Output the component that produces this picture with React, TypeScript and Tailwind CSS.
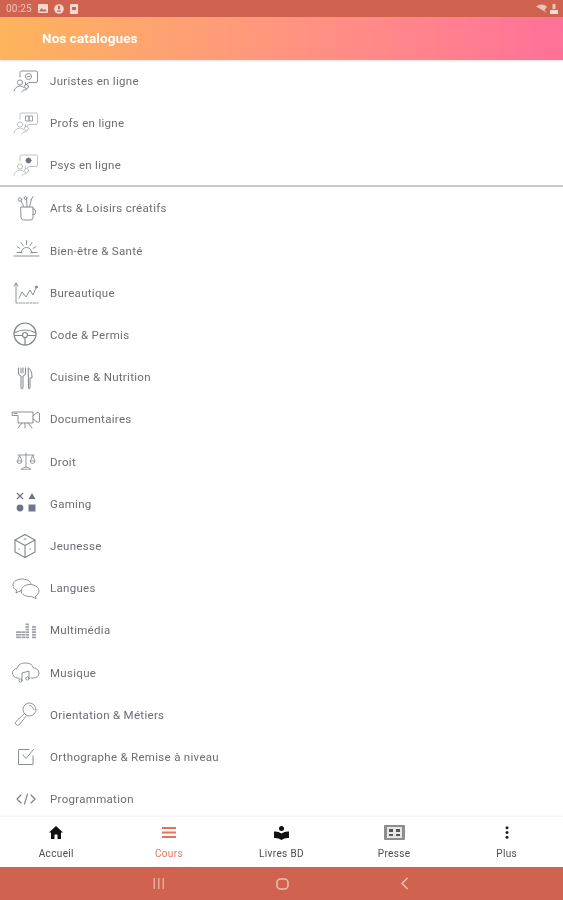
import React from "react";

type IconProps = { children: React.ReactNode; w?: number; h?: number; vb?: string; color?: string; sw?: number };
const Ico = ({ children, w = 28, h = 28, vb = "0 0 28 28", color = "#7f848c", sw = 0.9 }: IconProps) => (
  <svg width={w} height={h} viewBox={vb} fill="none" stroke={color} strokeWidth={sw} strokeLinecap="round" strokeLinejoin="round">
    {children}
  </svg>
);

const Consult = ({ color, inner }: { color: string; inner: React.ReactNode }) => (
  <Ico color={color}>
    <path d="M8 10V5.500Q8 4 9.500 4H24Q25.500 4 25.500 5.500V14Q25.500 15.500 24 15.500H17L13.500 18V15.500" />
    <circle cx="8" cy="15.500" r="2.600" />
    <path d="M2 24Q3 19.500 8 19Q10 19 12 20.500" />
    <circle cx="14.500" cy="19.500" r="2" />
    <path d="M9.500 25Q10.500 22.500 14.500 22.500" />
    {inner}
  </Ico>
);

const icons: Record<string, React.ReactNode> = {
  juristes: <Consult color="#7f848c" inner={<><circle cx="16.500" cy="9.500" r="3" /><path d="M15.500 9.500h2" /></>} />,
  profs: <Consult color="#b9bcc1" inner={<><path d="M14 7h3v5h-3zM17.500 7h3v5h-3z" stroke="#8d9196" /></>} />,
  psys: <Consult color="#b9bcc1" inner={<circle cx="16.500" cy="9.500" r="2.500" fill="#6b7280" stroke="#6b7280" />} />,
  arts: (
    <Ico>
      <path d="M9 13h12v10.500Q21 26 18.500 26H11.500Q9 26 9 23.500Z" />
      <path d="M21 15h1Q23.500 15 23.500 17v1.500Q23.500 20.500 22 20.500h-1" />
      <path d="M12 13 9 7M15 13 14.500 5M17.500 13l2-8" />
      <circle cx="8" cy="5.500" r="1.700" />
      <circle cx="13.500" cy="4" r="1.400" />
      <path d="M19.500 5l1.500-2.500" />
    </Ico>
  ),
  bien: (
    <Ico>
      <path d="M2 20h25M5 16.500h5M19 16.500h6" />
      <path d="M9 17a5.500 5.500 0 0 1 11 0" />
      <path d="M14.500 4.500v4M9 6.500l2 3M20 6.500l-2 3M5 10.500l3 2M24 10.500l-3 2" />
    </Ico>
  ),
  bureau: (
    <Ico>
      <path d="M4 5v19M2 8l2-3 2 3" />
      <path d="M4 25h22" strokeDasharray="2 1.500" />
      <path d="M7 20l3-6 4 5 4-7 3 5 3-7" />
      <circle cx="24.500" cy="9" r="1" fill="#7f848c" />
    </Ico>
  ),
  code: (
    <Ico sw={1.200}>
      <circle cx="13" cy="13" r="11" />
      <circle cx="13" cy="14" r="2.500" />
      <path d="M3 11.500Q13 6.500 23 11.500M13 16.500V24M2.500 14.500H10.500M15.500 14.500H23.500" />
    </Ico>
  ),
  cuisine: (
    <Ico sw={1.000}>
      <path d="M6.500 5v5Q6.500 12.500 9 13V24Q9 26 10 26T11 24V13Q13.500 12.500 13.500 10V5M9 5V10M11 5V10" />
      <path d="M16.500 5Q20 7 20 14v1h-2V24Q18 26 17.250 26T16.500 24Z" />
    </Ico>
  ),
  docu: (
    <Ico w={30} h={28} vb="0 0 30 28">
      <path d="M1.500 7H22V18H7V10.500H1.500Z" />
      <path d="M22 11l4-3.500Q28.500 7 28.500 9v7Q28.500 18 26 17l-4-3" />
      <path d="M14 18v5M11 18l-4 5M17 18l4 5" />
      <path d="M3 8.500h3" />
    </Ico>
  ),
  droit: (
    <Ico color="#8a8f96">
      <path d="M6 8h16M14 6v14" />
      <path d="M7.500 8.500 5.500 14h4ZM20.500 8.500 18.500 14h4Z" />
      <path d="M5 14a2.500 2.500 0 0 0 5 0M18 14a2.500 2.500 0 0 0 5 0" />
      <path d="M9.500 22q4.500-4 9 0Z" />
    </Ico>
  ),
  gaming: (
    <svg width="22" height="24" viewBox="0 0 22 24" fill="#6f7480">
      <path d="M2 2 8 8M8 2 2 8" stroke="#6f7480" strokeWidth="1.200" />
      <path d="M17 2 20.500 8H13.500Z" />
      <circle cx="5" cy="17" r="3.400" />
      <rect x="13.500" y="13.500" width="7" height="7" fill="#71768f" />
    </svg>
  ),
  jeunesse: (
    <Ico sw={1.100}>
      <path d="M13 2.500 23 8v12L13 25.500 3 20V8Z" />
      <path d="M3 8l10 5.500L23 8M13 13.500V25.500" />
      <path d="M12 7h2M7 17h.5M18 17h.5" />
    </Ico>
  ),
  langues: (
    <Ico w={30} h={28} vb="0 0 30 28">
      <path d="M20 9.500C19 6.500 15 5 11 5 6 5 2 7.500 2 11c0 2.500 1.500 4.500 3.500 5L5 19l4-2" />
      <path d="M10 17c0-3.500 4-6.500 9-6.500s9 3 9 6.500c0 2-1.500 4-3.500 5l.5 2.500-4.500-2c-5.500.5-10.500-2-10.500-5.500Z" />
    </Ico>
  ),
  multi: (
    <svg width="22" height="18" viewBox="0 0 22 18" fill="#9ea2a8">
      {[
        { x: 1, n: 3, w: 5 },
        { x: 6.500, n: 3, w: 3.500 },
        { x: 10.500, n: 6, w: 3.500 },
        { x: 17, n: 5, w: 4 },
      ].map((c) =>
        Array.from({ length: c.n }).map((_, j) => (
          <rect key={`${c.x}-${j}`} x={c.x} y={15.500 - j * 2.600} width={c.w} height="1.700" />
        ))
      )}
    </svg>
  ),
  musique: (
    <Ico w={30} h={28} vb="0 0 30 28">
      <path d="M8 20H6.500C3.500 20 1.500 17.500 1.500 15S3.500 10.500 6 10.500C7 6.500 10.500 5 14.500 5 18.500 5 21.500 6.500 22.500 10 25.500 10 28 12 28 15S25.500 20 22.500 20H20" />
      <path d="M11 22V15l7-2v7" />
      <circle cx="9.500" cy="22.500" r="1.600" />
      <circle cx="16.500" cy="20.500" r="1.600" />
    </Ico>
  ),
  orient: (
    <Ico color="#8a8f96">
      <circle cx="17.500" cy="9.500" r="6.500" />
      <path d="M17.500 5.500a4 4 0 0 1 4 4" />
      <path d="M12.500 13.500 4 21.500Q2.500 23 4 24.500T7.500 24.500L14.500 15.500" />
    </Ico>
  ),
  ortho: (
    <Ico color="#8a8f96" sw={1}>
      <path d="M21 13V21.500H6.500V6.500H17" />
      <path d="M11 12l3 3.500L21.500 6.500" />
    </Ico>
  ),
  prog: (
    <svg width="24" height="14" viewBox="0 0 24 14" fill="none" stroke="#767b82" strokeWidth="1.100" strokeLinecap="round" strokeLinejoin="round">
      <path d="M7 3 3 7 7 11M17 3 21 7 17 11M13.500 2l-3 10" />
    </svg>
  ),
};

const top = [
  { k: "juristes", t: "Juristes en ligne" },
  { k: "profs", t: "Profs en ligne" },
  { k: "psys", t: "Psys en ligne" },
];
const cats = [
  { k: "arts", t: "Arts & Loisirs créatifs" },
  { k: "bien", t: "Bien-être & Santé" },
  { k: "bureau", t: "Bureautique" },
  { k: "code", t: "Code & Permis" },
  { k: "cuisine", t: "Cuisine & Nutrition" },
  { k: "docu", t: "Documentaires" },
  { k: "droit", t: "Droit" },
  { k: "gaming", t: "Gaming" },
  { k: "jeunesse", t: "Jeunesse" },
  { k: "langues", t: "Langues" },
  { k: "multi", t: "Multimédia" },
  { k: "musique", t: "Musique" },
  { k: "orient", t: "Orientation & Métiers" },
  { k: "ortho", t: "Orthographe & Remise à niveau" },
  { k: "prog", t: "Programmation" },
];

const Row = ({ k, t, tall }: { k: string; t: string; tall?: boolean }) => (
  <div className={`flex items-center ${tall ? "h-[42px]" : "h-[42.2px]"}`}>
    <div className="w-[50px] shrink-0 flex items-center justify-center pl-[1px]">{icons[k]}</div>
    <span className="pt-[2px] text-[11.500px] tracking-[0.3px] text-[#6a6d72]">{t}</span>
  </div>
);

const Nav = ({ label, icon, active }: { label: string; icon: React.ReactNode; active?: boolean }) => (
  <div className="flex-1 flex flex-col items-center pt-[7px]">
    <div className="h-[17px] flex items-center justify-center">{icon}</div>
    <span className={`mt-[5px] text-[10px] leading-[16px] tracking-[0.35px] ${active ? "text-[#e8705f]" : "text-[#4a4d51]"}`}>{label}</span>
  </div>
);

export default function App() {
  return (
    <div className="w-[563px] h-[900px] flex flex-col overflow-hidden bg-white blur-[0.4px] font-['Roboto',sans-serif]">
      <div className="h-[17px] shrink-0 bg-[#cf6350] flex items-center justify-between pl-[6px] pr-[5px]">
        <div className="flex items-center gap-[6px]">
          <span className="text-[10px] leading-none tracking-[0.2px] text-[#f3c4b9]">00:25</span>
          <svg width="10" height="9" viewBox="0 0 10 9"><rect width="10" height="9" rx="1" fill="#f3d8d0" /><path d="M1 7.500 3.500 4l2 2L7 5l2 2.500Z" fill="#cf6350" /></svg>
          <svg width="10" height="10" viewBox="0 0 10 10"><circle cx="5" cy="5" r="4.800" fill="#f3d8d0" /><rect x="4" y="1.800" width="2" height="3.500" fill="#cf6350" /><rect x="3" y="6.500" width="4" height="1.200" fill="#cf6350" /></svg>
          <svg width="8" height="10" viewBox="0 0 8 10"><rect width="8" height="10" rx="1" fill="#f3d8d0" /><rect x="2" y="3" width="4" height="3" fill="#cf6350" /></svg>
        </div>
        <div className="flex items-center gap-[3px]">
          <svg width="11" height="9" viewBox="0 0 11 9"><path d="M0 2.500Q5.500-1.500 11 2.500L8 7Z" fill="#eec4b9" /><path d="M8 6.500l2 2" stroke="#eec4b9" /></svg>
          <svg width="8" height="10" viewBox="0 0 8 10"><rect x="2.500" y="0" width="3" height="5" fill="#eec4b9" /><rect x="0" y="6" width="8" height="4" fill="#f3d8d0" /></svg>
        </div>
      </div>

      <div className="h-[43px] shrink-0 bg-gradient-to-r from-[#fdb45a] to-[#ff7098] flex items-center pl-[42px] shadow-[0_1px_2px_rgba(0,0,0,0.12)] relative">
        <span className="text-[13.500px] font-bold tracking-[0.1px] text-white">Nos catalogues</span>
      </div>

      <div className="border-b-2 border-[#c9c9c9] shrink-0 h-[127px]">
        {top.map((r) => <Row key={r.k} {...r} tall />)}
      </div>

      <div className="flex-1 min-h-0 overflow-hidden">
        {cats.map((r) => <Row key={r.k} {...r} />)}
      </div>

      <div className="h-[50px] shrink-0 bg-white flex shadow-[0_-1px_2px_rgba(0,0,0,0.06)] relative">
        <Nav label="Accueil" icon={
          <svg width="14" height="13" viewBox="0 0 14 13" fill="#111"><path d="M7 0 14 6.500H12V13H8.500V8.500h-3V13H2V6.500H0Z" /></svg>
        } />
        <Nav label="Cours" active icon={
          <svg width="14" height="11" viewBox="0 0 14 11" fill="#e8705f"><rect width="14" height="2" /><rect y="4.500" width="14" height="2" /><rect y="9" width="14" height="2" /></svg>
        } />
        <Nav label="Livres BD" icon={
          <svg width="15" height="14" viewBox="0 0 15 14" fill="#111"><circle cx="7.500" cy="2.500" r="2.500" /><path d="M0 5.500Q4 5 7.500 7.500 11 5 15 5.500V12Q11 11.500 7.500 14 4 11.500 0 12Z" /></svg>
        } />
        <Nav label="Presse" icon={
          <svg width="21" height="15" viewBox="0 0 21 15"><rect width="21" height="15" rx="1" fill="#8d8d8d" /><rect x="3" y="2" width="15" height="11" fill="#e6e6e6" /><path d="M5 4h4v3H5zM12 4h4v3h-4zM5 9h4v2H5zM12 9h4v2h-4z" fill="#555" /></svg>
        } />
        <Nav label="Plus" icon={
          <svg width="4" height="13" viewBox="0 0 4 13" fill="#222"><circle cx="2" cy="1.700" r="1.500" /><circle cx="2" cy="6.500" r="1.500" /><circle cx="2" cy="11.300" r="1.500" /></svg>
        } />
      </div>

      <div className="h-[33px] shrink-0 bg-[#cf6350] flex items-center">
        <div className="flex-1 flex justify-center pl-[43px]">
          <svg width="12" height="11" viewBox="0 0 12 11" fill="#eba99b"><rect x="0.500" width="1.500" height="11" /><rect x="5" width="1.500" height="11" /><rect x="9.500" width="1.500" height="11" /></svg>
        </div>
        <div className="flex justify-center">
          <svg width="13" height="12" viewBox="0 0 13 12" fill="none" stroke="#f0bdb1" strokeWidth="1.500"><rect x="1" y="1" width="11" height="10" rx="3.500" /></svg>
        </div>
        <div className="flex-1 flex justify-center pr-[42px]">
          <svg width="9" height="13" viewBox="0 0 9 13" fill="none" stroke="#f0bdb1" strokeWidth="1.500"><path d="M7.500 1 2 6.500 7.500 12" /></svg>
        </div>
      </div>
    </div>
  );
}
